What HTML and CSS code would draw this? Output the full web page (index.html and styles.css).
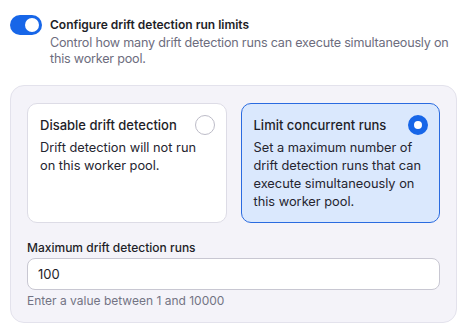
FILE: index.html
```html
<!DOCTYPE html>
<html lang="en">
<head>
  <meta charset="UTF-8">
  <meta name="viewport" content="width=device-width, initial-scale=1.0">
  <title>Drift detection settings</title>
  <link rel="stylesheet" href="styles.css">
</head>
<body>
  <div class="setting">
    <label class="switch">
      <input type="checkbox" checked>
      <span class="track"><span class="knob"></span></span>
    </label>
    <div class="setting-text">
      <div class="setting-title">Configure drift detection run limits</div>
      <div class="setting-desc">Control how many drift detection runs can execute simultaneously on this worker pool.</div>
    </div>
  </div>

  <div class="panel">
    <div class="options">
      <div class="option">
        <div class="option-head">
          <span class="option-title">Disable drift detection</span>
          <span class="radio"></span>
        </div>
        <p class="option-desc">Drift detection will not run on this worker pool.</p>
      </div>
      <div class="option selected">
        <div class="option-head">
          <span class="option-title">Limit concurrent runs</span>
          <span class="radio"></span>
        </div>
        <p class="option-desc">Set a maximum number of drift detection runs that can execute simultaneously on this worker pool.</p>
      </div>
    </div>

    <label class="field-label" for="maxRuns">Maximum drift detection runs</label>
    <input class="field-input" type="text" id="maxRuns" value="100">
    <p class="field-hint">Enter a value between 1 and 10000</p>
  </div>
</body>
</html>
```

FILE: styles.css
```css
body {
  font-family: Inter, "Noto Sans", sans-serif;
  margin: 0;
  padding: 15px 2px 0 10px;
  background-color: #ffffff;
  color: #1e1e28;
}
.setting {
  display: flex;
  gap: 8px;
}
.switch {
  flex: none;
}
.switch input {
  display: none;
}
.track {
  display: block;
  width: 32px;
  height: 20px;
  border-radius: 10px;
  background-color: #1766e8;
  position: relative;
}
.knob {
  position: absolute;
  top: 3px;
  right: 3px;
  width: 14px;
  height: 14px;
  border-radius: 50%;
  background: white;
}
.setting-text {
  flex: 1;
  min-width: 0;
}
.setting-title {
  font-size: 12px;
  font-weight: 600;
  line-height: 20px;
}
.setting-desc {
  font-size: 12.6px;
  letter-spacing: -0.2px;
  line-height: 15.5px;
  color: #6d6d7e;
  margin-right: -4px;
}
.panel {
  margin-top: 19px;
  background-color: #f4f3f9;
  border: 1px solid #e3e2ec;
  border-radius: 14px;
  padding: 17px 16px 13px;
}
.options {
  display: grid;
  grid-template-columns: 1fr 1fr;
  gap: 14px;
}
.option {
  background: white;
  border: 1px solid #dddce6;
  border-radius: 10px;
  padding: 11px 11px 11px 12px;
  height: 120px;
  box-sizing: border-box;
}
.option.selected {
  background-color: #dae8fd;
  border-color: #2a6be0;
}
.option-head {
  display: flex;
  justify-content: space-between;
  align-items: center;
}
.option-title {
  font-size: 13px;
  font-weight: 500;
  line-height: 20px;
}
.radio {
  width: 20px;
  height: 20px;
  border-radius: 50%;
  border: 1px solid #bdbcc8;
  background: white;
  box-sizing: border-box;
}
.selected .radio {
  border: 6px solid #1766e8;
}
.option-desc {
  margin: 4px 0 0;
  font-size: 12.8px;
  line-height: 18px;
  color: #25252f;
}
.field-label {
  display: block;
  margin-top: 16px;
  font-size: 12px;
  font-weight: 500;
  line-height: 18px;
}
.field-input {
  display: block;
  width: 100%;
  height: 32px;
  margin-top: 1px;
  padding: 0 10px;
  border: 1px solid #c8c7d2;
  border-radius: 8px;
  box-sizing: border-box;
  font-family: inherit;
  font-size: 13px;
  color: #1e1e28;
  background: white;
}
.field-hint {
  margin: 3px 0 0;
  font-size: 12px;
  line-height: 16px;
  color: #737384;
}
```
